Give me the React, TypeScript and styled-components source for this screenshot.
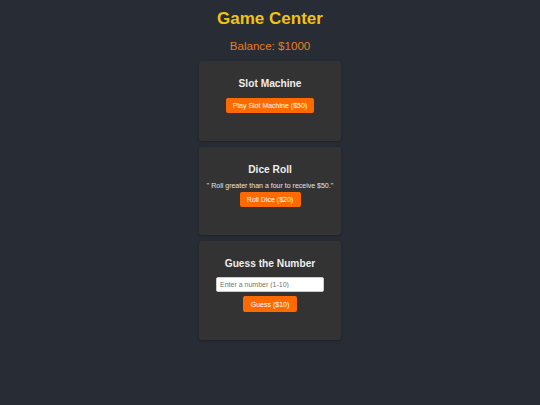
import styled, { createGlobalStyle } from 'styled-components';

const GlobalStyle = createGlobalStyle`
  html, body {
    margin: 0;
    padding: 0;
    background: #282c34;
    font-family: "Liberation Sans", Arial, sans-serif;
  }
  * {
    box-sizing: border-box;
  }
`;

const Page = styled.div`
  min-height: 405px;
  display: flex;
  flex-direction: column;
  align-items: center;
  padding-top: 8px;
`;

const Title = styled.h1`
  margin: 0;
  font-size: 17px;
  line-height: 21px;
  font-weight: bold;
  color: #f1c40f;
`;

const Balance = styled.p`
  margin: 10px 0 8px;
  font-size: 11.6px;
  line-height: 14px;
  color: #e67e22;
`;

const Games = styled.div`
  display: flex;
  flex-direction: column;
  gap: 6px;
`;

const Card = styled.section`
  width: 142px;
  background: #333333;
  border-radius: 3px;
  padding: 16px 8px 28px;
  display: flex;
  flex-direction: column;
  align-items: center;
  box-shadow: 0 1px 3px rgba(0, 0, 0, 0.25);
`;

const CardTitle = styled.h2<{ $gap: number }>`
  margin: 0 0 ${({ $gap }) => $gap}px;
  font-size: 10.2px;
  line-height: 13px;
  font-weight: bold;
  color: #eeeeee;
  white-space: nowrap;
`;

const Hint = styled.p`
  margin: 0 0 2px;
  font-size: 7px;
  line-height: 9px;
  color: #e6e6e6;
  white-space: nowrap;
`;

const Button = styled.button<{ $width: number; $height?: number }>`
  width: ${({ $width }) => $width}px;
  height: ${({ $height }) => $height ?? 15}px;
  padding: 0;
  border: none;
  border-radius: 2px;
  background: #ff6a00;
  color: #ffffff;
  font-family: "Liberation Sans", Arial, sans-serif;
  font-size: 7px;
  cursor: pointer;
`;

const NumberInput = styled.input`
  width: 108px;
  height: 15px;
  margin: 0 0 4px;
  padding: 0 3px;
  border: 1px solid #cccccc;
  border-radius: 2px;
  background: #ffffff;
  font-family: "Liberation Sans", Arial, sans-serif;
  font-size: 7px;
  color: #333;

  &::placeholder {
    color: #757575;
  }
`;

const App = () => {
  return (
    <>
      <GlobalStyle />
      <Page>
        <Title>Game Center</Title>
        <Balance>Balance: $1000</Balance>
        <Games>
          <Card>
            <CardTitle $gap={8}>Slot Machine</CardTitle>
            <Button $width={88}>Play Slot Machine ($50)</Button>
          </Card>
          <Card>
            <CardTitle $gap={5}>Dice Roll</CardTitle>
            <Hint>" Roll greater than a four to receive $50."</Hint>
            <Button $width={61}>Roll Dice ($20)</Button>
          </Card>
          <Card>
            <CardTitle $gap={7}>Guess the Number</CardTitle>
            <NumberInput type="number" placeholder="Enter a number (1-10)" />
            <Button $width={54} $height={16}>Guess ($10)</Button>
          </Card>
        </Games>
      </Page>
    </>
  );
};

export default App;
